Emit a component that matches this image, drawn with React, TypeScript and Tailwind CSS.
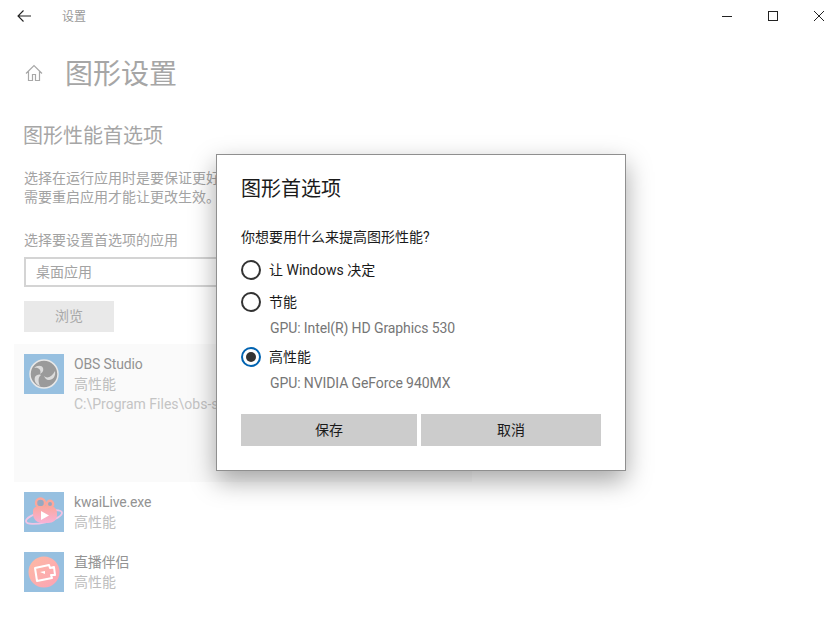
import React from 'react';

const FONT = 'font-["Roboto","Noto_Sans_CJK_SC",sans-serif]';

const ObsIcon = () => (
  <svg viewBox="0 0 40 40" className="w-10 h-10">
    <rect width="40" height="40" fill="#97c0e0" />
    <circle cx="20" cy="20" r="14" fill="#9a9a9a" stroke="#e8e8e8" strokeWidth="1.5" />
    <path d="M10 14c3-3 8-3 9 0 1 3-1 5-3 6 2-4-2-7-6-6z" fill="#dcdcdc" />
    <path d="M31 17c1 5-2 9-6 9-3 0-4-2-5-4 3 3 8 1 11-5z" fill="#dcdcdc" />
    <path d="M16 32c-5-2-6-6-5-9 1-2 4-3 6-2-3 2-3 7-1 11z" fill="#dcdcdc" />
  </svg>
);

const KwaiIcon = () => (
  <svg viewBox="0 0 40 40" className="w-10 h-10">
    <defs>
      <linearGradient id="kwai" x1="0" y1="0" x2="0" y2="1">
        <stop offset="0" stopColor="#fba79c" />
        <stop offset="1" stopColor="#f8b2d6" />
      </linearGradient>
    </defs>
    <rect width="40" height="40" fill="#97c0e0" />
    <ellipse cx="20" cy="25" rx="18.500" ry="5.500" transform="rotate(-14 20 25)" fill="none" stroke="#f0c4e4" strokeWidth="1.8" />
    <circle cx="16.500" cy="11" r="4.500" fill="#97a8c0" stroke="#fba79c" strokeWidth="2.4" />
    <circle cx="26" cy="12" r="3.200" fill="#97a8c0" stroke="#fba79c" strokeWidth="2.4" />
    <path d="M9 19c0-3 3-5 6-5h11c4 0 7 3 7 7v2c0 5-4 8-9 8h-6c-5 0-9-4-9-9z" fill="url(#kwai)" />
    <path d="M17 19l8 4.500-8 4.500z" fill="#fff" />
  </svg>
);

const LiveIcon = () => (
  <svg viewBox="0 0 40 40" className="w-10 h-10">
    <defs>
      <linearGradient id="live" x1="0" y1="0" x2="1" y2="1">
        <stop offset="0" stopColor="#fdbaa3" />
        <stop offset="1" stopColor="#fca3b6" />
      </linearGradient>
    </defs>
    <rect width="40" height="40" fill="#97c0e0" />
    <circle cx="20" cy="20" r="15.500" fill="url(#live)" />
    <path d="M11 16l14-3 1 3 4-1 1 8-4 0 1 3-15 3z" fill="none" stroke="#fff" strokeWidth="2" strokeLinejoin="round" />
    <path d="M16 20l5-1v3z" fill="#fff" />
  </svg>
);

const AppRow = ({ icon, name, selected, path }: { icon: React.ReactNode; name: string; selected?: boolean; path?: string }) => (
  <div className={`flex gap-[10px] -ml-[10px] pl-[10px] pt-[10px] ${selected ? 'h-[138px] bg-[#fafafa]' : 'h-[60px]'}`}>
    {icon}
    <div className="text-[14px] leading-[20px] whitespace-nowrap">
      <div className="text-[#939393] tracking-[-0.15px]">{name}</div>
      <div className="text-[#bdbdbd]">高性能</div>
      {path && <div className="text-[#c4c4c4]">{path}</div>}
    </div>
  </div>
);

const Radio = ({ checked, label }: { checked?: boolean; label: string }) => (
  <div className="flex items-center gap-2 h-5">
    <span className={`w-5 h-5 rounded-full border-2 flex items-center justify-center ${checked ? 'border-[#0063b1]' : 'border-[#333333]'}`}>
      {checked && <span className="w-[10px] h-[10px] rounded-full bg-[#333333]" />}
    </span>
    <span className="text-[14px] text-[#1a1a1a]">{label}</span>
  </div>
);

export default function App() {
  return (
    <div className={`relative w-[839px] h-[619px] overflow-hidden bg-white ${FONT}`}>
      {/* Title bar */}
      <div className="flex items-center h-8 pl-[17px]">
        <svg viewBox="0 0 14 12" className="w-[14px] h-3" fill="none" stroke="#222" strokeWidth="1.1">
          <path d="M14 6H1M6.500.5L1 6l5.500 5.500" />
        </svg>
        <span className="ml-[31px] mt-[2px] text-[12px] text-[#9a9a9a]">设置</span>
        <div className="ml-auto flex items-center gap-[36px] pr-[15px]">
          <svg viewBox="0 0 10 10" className="w-[10px] h-[10px]" stroke="#222" strokeWidth="1"><path d="M0 5.500h10" /></svg>
          <svg viewBox="0 0 10 10" className="w-[10px] h-[10px]" fill="none" stroke="#222" strokeWidth="1"><rect x=".5" y=".5" width="9" height="9" /></svg>
          <svg viewBox="0 0 10 10" className="w-[10px] h-[10px]" stroke="#222" strokeWidth="1"><path d="M0 0l10 10M10 0L0 10" /></svg>
        </div>
      </div>

      {/* Heading */}
      <div className="flex items-center h-[40px] mt-[21px] pl-[25px]">
        <svg viewBox="0 0 18 18" className="w-[18px] h-[18px]" fill="none" stroke="#a8a8a8" strokeWidth="1.2">
          <path d="M1 9.500L9 1.500l8 8M3.500 7.500v9h4v-6h3v6h4v-9" />
        </svg>
        <h1 className="ml-[22px] mt-[3px] text-[28px] leading-[40px] text-[#a6a6a6]">图形设置</h1>
      </div>

      {/* Content column, runs under the dialog */}
      <div className="w-[448px] ml-[24px] mt-[29px]">
        <h2 className="-ml-px text-[20px] leading-[28px] text-[#a6a6a6]">图形性能首选项</h2>
        <p className="mt-[19px] w-[192px] overflow-hidden text-[14px] leading-[19px] text-[#a3a3a3] whitespace-nowrap">
          选择在运行应用时是要保证更好的性能
          <br />
          需要重启应用才能让更改生效。
        </p>
        <div className="mt-[23px] text-[14px] leading-[20px] text-[#a3a3a3]">选择要设置首选项的应用</div>
        <div className="mt-[7px] h-[30px] border-2 border-[#d4d4d4] pl-[10px] flex items-center text-[14px] text-[#a3a3a3]">桌面应用</div>
        <button className="mt-[14px] block w-[90px] h-[31px] bg-[#e9e9e9] text-[14px] text-[#a8a8a8]">浏览</button>
        <div className="mt-3">
          <AppRow selected icon={<ObsIcon />} name="OBS Studio" path="C:\Program Files\obs-studio\bin\64bit" />
          <AppRow icon={<KwaiIcon />} name="kwaiLive.exe" />
          <AppRow icon={<LiveIcon />} name="直播伴侣" />
        </div>
      </div>

      {/* Dialog */}
      <div className="absolute left-[216px] top-[154px] w-[410px] h-[317px] bg-white border border-[#8f8f8f] shadow-[0_10px_24px_rgba(0,0,0,0.35)] pl-[24px] pr-[24px] pt-[20px]">
        <h3 className="text-[20px] leading-[28px] text-[#1a1a1a]">图形首选项</h3>
        <div className="mt-[24px] text-[14px] leading-[20px] text-[#1a1a1a]">你想要用什么来提高图形性能?</div>
        <div className="mt-[13px]"><Radio label="让 Windows 决定" /></div>
        <div className="mt-3"><Radio label="节能" /></div>
        <div className="mt-[6px] ml-[29px] text-[14px] leading-[20px] text-[#767676] tracking-[-0.1px]">GPU: Intel(R) HD Graphics 530</div>
        <div className="mt-[9px]"><Radio checked label="高性能" /></div>
        <div className="mt-[6px] ml-[29px] text-[14px] leading-[20px] text-[#767676] tracking-[-0.1px]">GPU: NVIDIA GeForce 940MX</div>
        <div className="mt-[21px] flex gap-1">
          <button className="w-[176px] h-8 bg-[#cccccc] text-[14px] text-[#1a1a1a]">保存</button>
          <button className="w-[180px] h-8 bg-[#cccccc] text-[14px] text-[#1a1a1a]">取消</button>
        </div>
      </div>
    </div>
  );
}
